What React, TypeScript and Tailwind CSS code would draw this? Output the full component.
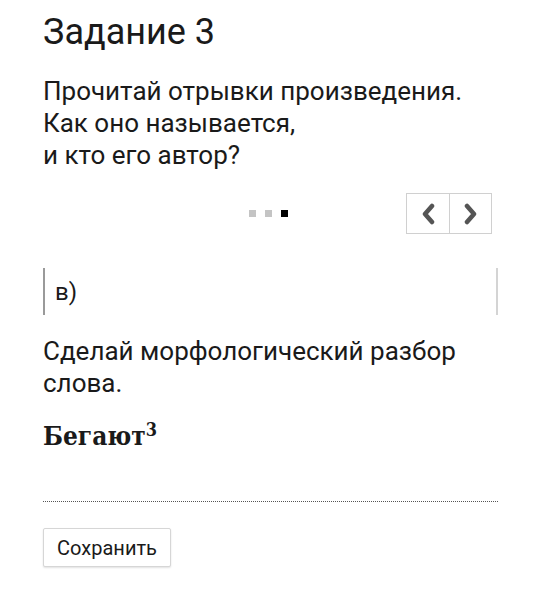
import { useState } from "react";

const slides = ["а)", "б)", "в)"];

export default function App() {
  const [active, setActive] = useState(2);

  return (
    <div className="min-h-[606px] bg-white pl-[43px] pr-[35px] pt-[10px] font-['Roboto',sans-serif] text-[#1a1a1a]">
      <h1 className="text-[36px] leading-[44px] font-normal">Задание 3</h1>

      <p className="mt-[21px] text-[26px] leading-[32px]">
        Прочитай отрывки произведения.
        <br />
        Как оно называется,
        <br />
        и кто его автор?
      </p>

      {/* slider controls */}
      <div className="mt-[22px] flex items-center">
        <div className="flex flex-1 justify-center gap-[9px] pl-[88px]">
          {slides.map((s, i) => (
            <span
              key={s}
              className={i === active ? "h-[7px] w-[7px] bg-black" : "h-[7px] w-[7px] bg-[#c4c4c4]"}
            />
          ))}
        </div>
        <div className="mr-[6px] flex h-[41px] border border-[#d0d0d0]">
          <button
            onClick={() => setActive((a) => Math.max(0, a - 1))}
            className="flex w-[43px] items-center justify-center border-r border-[#d0d0d0]"
          >
            <svg width="16" height="22" viewBox="0 0 16 22">
              <path d="M12 3 L5 11 L12 19" fill="none" stroke="#555" strokeWidth="4.5" strokeLinecap="round" strokeLinejoin="round" />
            </svg>
          </button>
          <button
            onClick={() => setActive((a) => Math.min(slides.length - 1, a + 1))}
            className="flex w-[41px] items-center justify-center"
          >
            <svg width="16" height="22" viewBox="0 0 16 22">
              <path d="M4 3 L11 11 L4 19" fill="none" stroke="#555" strokeWidth="4.5" strokeLinecap="round" strokeLinejoin="round" />
            </svg>
          </button>
        </div>
      </div>

      {/* slide */}
      <div className="mt-[34px] flex h-[47px] items-center justify-between">
        <div className="flex h-full items-center border-l-2 border-[#9a9a9a] pl-[10px] text-[24px]">
          {slides[active]}
        </div>
        <div className="h-full w-[2px] bg-[#d4d4d4]" />
      </div>

      <p className="mt-[20px] text-[26px] leading-[32px]">
        Сделай морфологический разбор
        <br />
        слова.
      </p>

      <div className="mt-[22px] font-['DejaVu_Serif',serif] text-[26px] font-bold leading-[30px] [font-stretch:condensed]">
        Бегают<sup className="text-[18px]">3</sup>
      </div>

      <div className="mt-[50px] border-b border-dotted border-[#555]" />

      <button className="mt-[26px] h-[39px] w-[128px] rounded-[2px] border border-[#d6d6d6] bg-white text-[20px] shadow-[0_1px_2px_rgba(0,0,0,0.12)]">
        Сохранить
      </button>
    </div>
  );
}
